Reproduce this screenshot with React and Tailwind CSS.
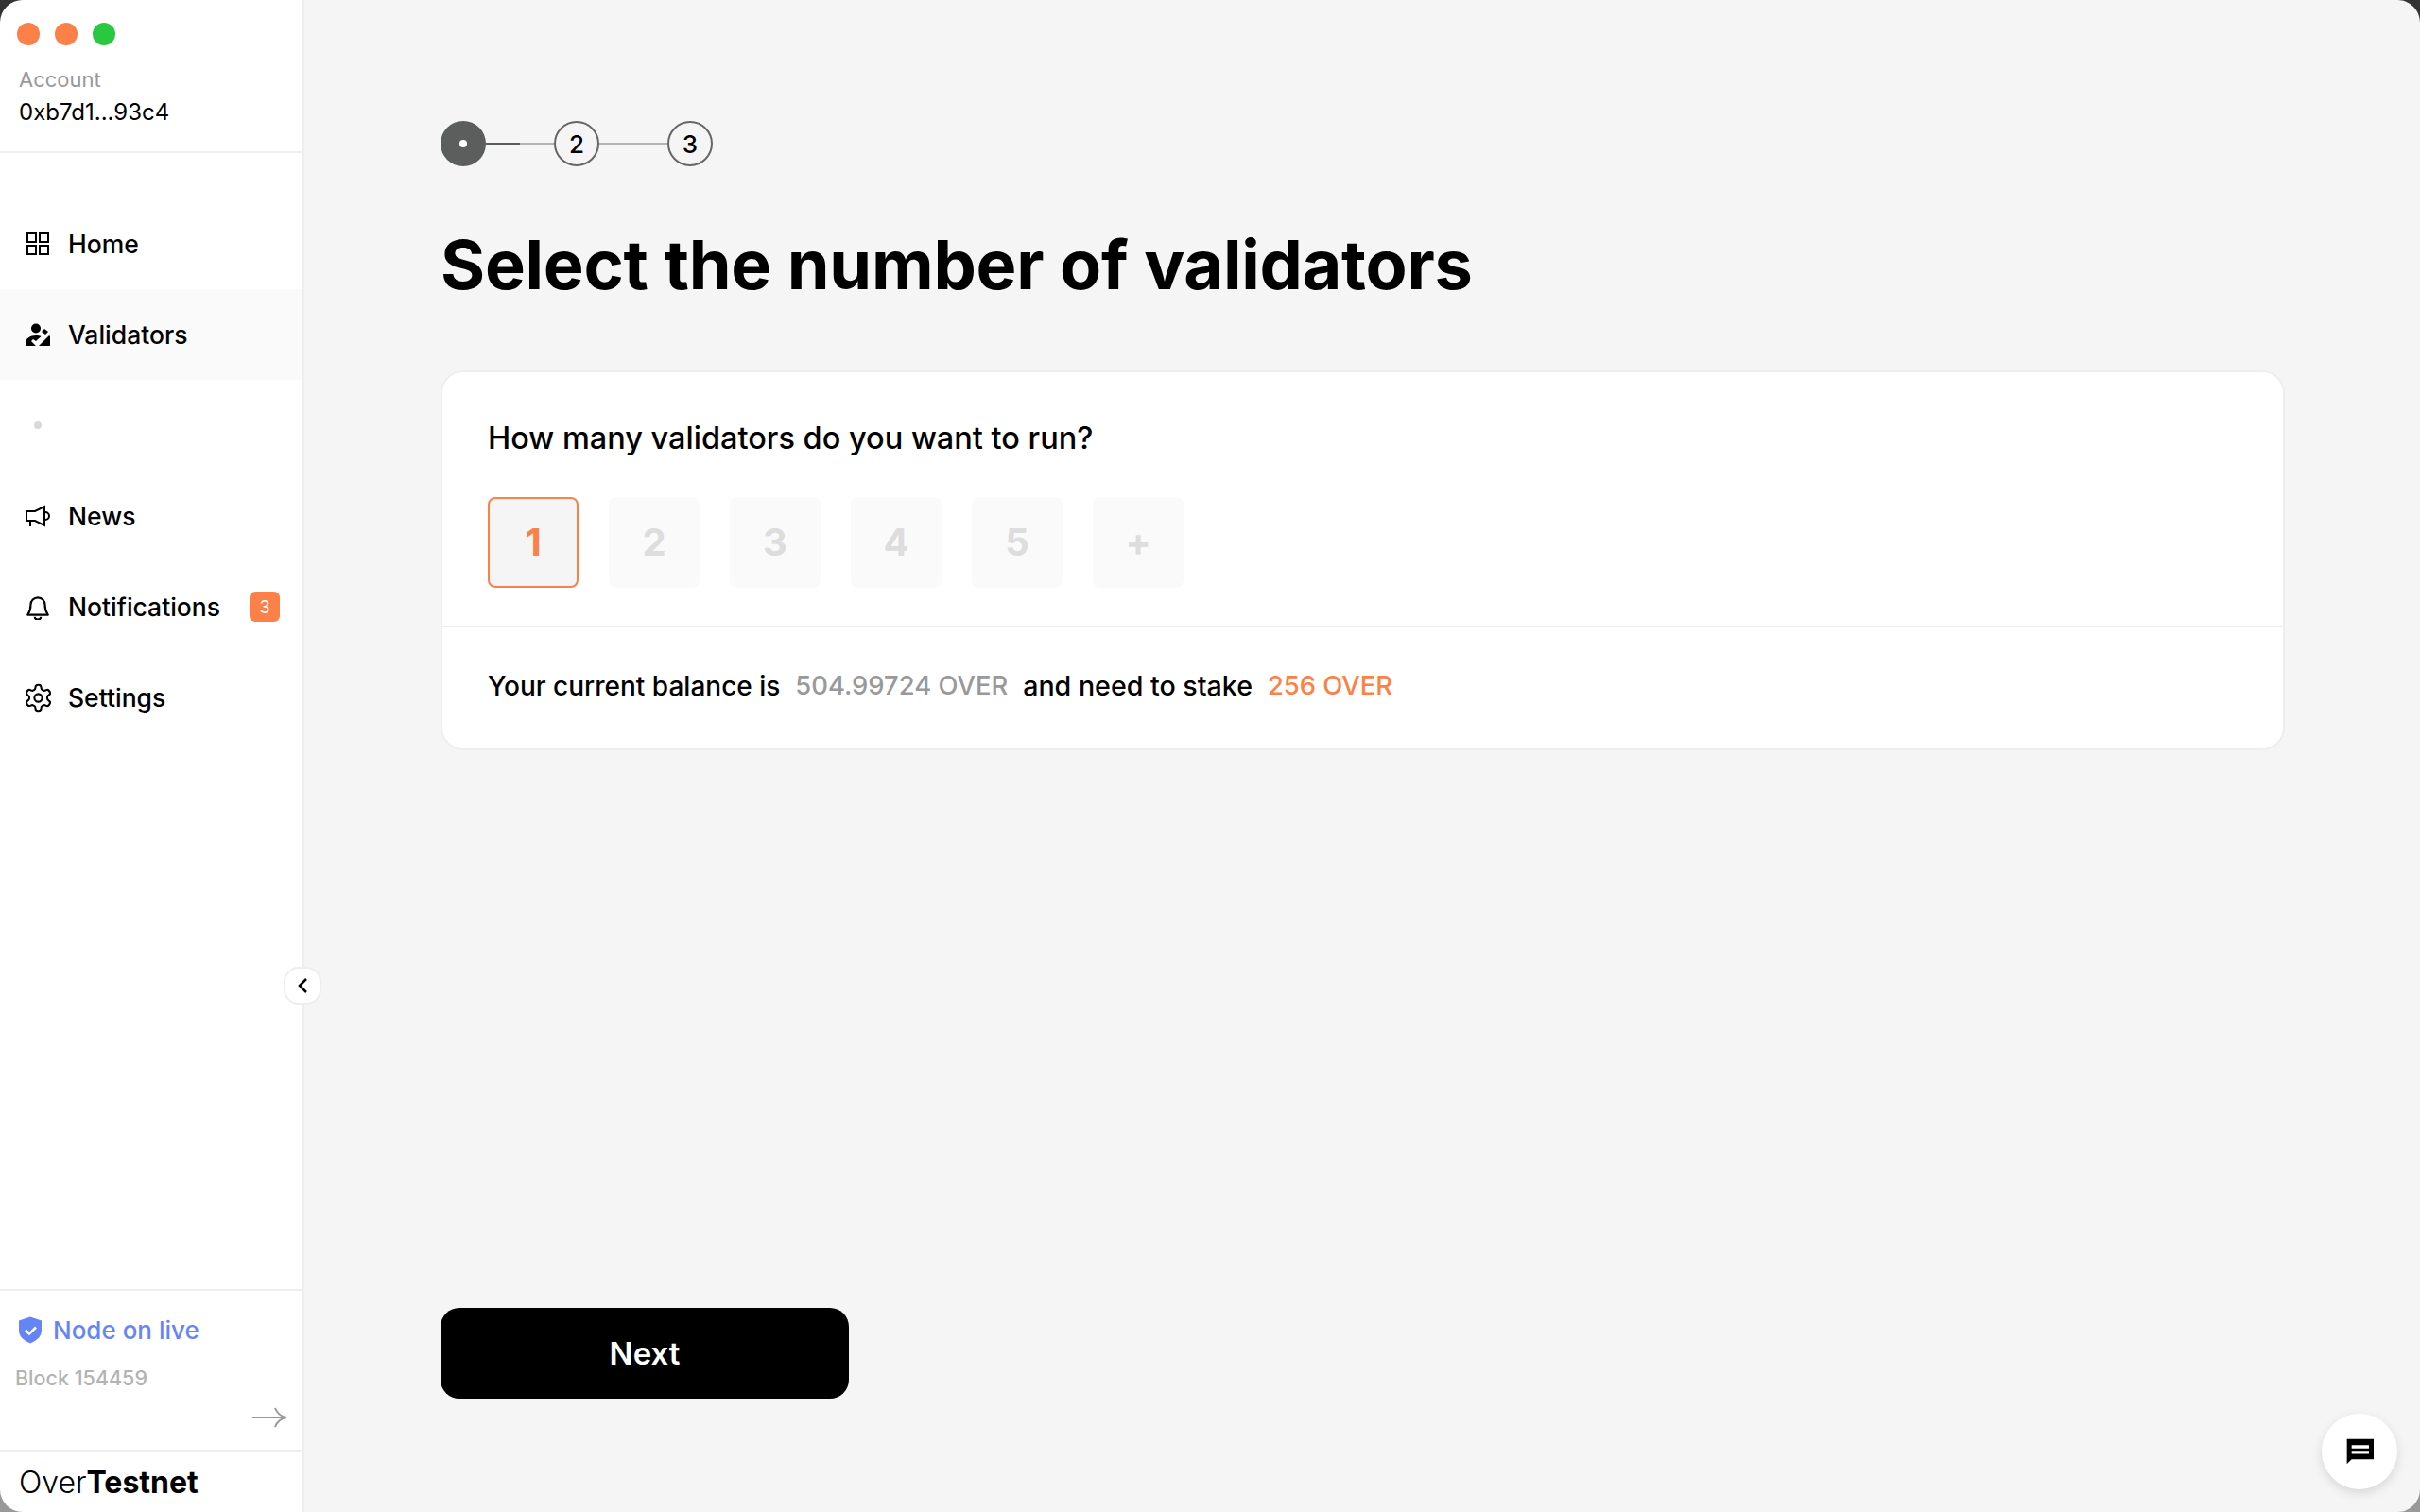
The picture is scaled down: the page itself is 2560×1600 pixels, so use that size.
import { useState } from 'react';

const HomeIcon = () => (
  <svg width="24" height="24" viewBox="0 0 24 24" fill="none" stroke="#000" strokeWidth="2">
    <rect x="1" y="1" width="9" height="9" />
    <rect x="14" y="1" width="9" height="9" />
    <rect x="1" y="14" width="9" height="9" />
    <rect x="14" y="14" width="9" height="9" />
  </svg>
);

const ValidatorIcon = () => (
  <svg width="26" height="24" viewBox="0 0 26 24" fill="#000">
    <circle cx="11" cy="5.500" r="5" />
    <path d="M0 24v-3c0-5 5-8 11-8 2 0 4 .4 5.500 1L11 19l-3-2-2 2 5 5z" />
    <path d="M14 24l11-11 1 1v10z" />
    <path d="M17 9l3-3 4 3-3 3z" />
  </svg>
);

const NewsIcon = () => (
  <svg width="26" height="24" viewBox="0 0 26 24" fill="none" stroke="#000" strokeWidth="2">
    <path d="M1 7h9l10-5v20l-10-5H1z" />
    <path d="M5 17v6" />
    <path d="M21 8a4 4 0 0 1 0 8" />
  </svg>
);

const BellIcon = () => (
  <svg width="26" height="28" viewBox="0 0 24 26" fill="none" stroke="#000" strokeWidth="2">
    <path d="M5 11a7 7 0 0 1 14 0c0 6 1 7 3 10H2c2-3 3-4 3-10z" strokeLinejoin="round" />
    <path d="M9 23a3 2.500 0 0 0 6 0" />
  </svg>
);

const GearIcon = () => (
  <svg width="33" height="33" viewBox="0 0 24 24" fill="none" stroke="#000" strokeWidth="1.500" strokeLinecap="round" strokeLinejoin="round">
    <path d="M12.220 2h-.440a2 2 0 0 0-2 2v.180a2 2 0 0 1-1 1.730l-.430.250a2 2 0 0 1-2 0l-.150-.080a2 2 0 0 0-2.730.730l-.220.380a2 2 0 0 0 .730 2.730l.150.100a2 2 0 0 1 1 1.720v.510a2 2 0 0 1-1 1.740l-.150.090a2 2 0 0 0-.730 2.730l.220.380a2 2 0 0 0 2.730.730l.150-.080a2 2 0 0 1 2 0l.430.250a2 2 0 0 1 1 1.730V20a2 2 0 0 0 2 2h.440a2 2 0 0 0 2-2v-.180a2 2 0 0 1 1-1.730l.430-.250a2 2 0 0 1 2 0l.150.080a2 2 0 0 0 2.730-.730l.220-.390a2 2 0 0 0-.730-2.730l-.150-.080a2 2 0 0 1-1-1.740v-.500a2 2 0 0 1 1-1.740l.150-.090a2 2 0 0 0 .730-2.730l-.220-.380a2 2 0 0 0-2.730-.730l-.150.080a2 2 0 0 1-2 0l-.430-.250a2 2 0 0 1-1-1.730V4a2 2 0 0 0-2-2z" />
    <circle cx="12" cy="12" r="3" />
  </svg>
);

const ShieldIcon = () => (
  <svg width="24" height="29" viewBox="0 0 24 28">
    <path d="M12 0l12 4v10c0 7-5 11-12 14C5 25 0 21 0 14V4z" fill="#6685f5" />
    <path d="M7 14l4 4 7-7" fill="none" stroke="#fff" strokeWidth="2.500" />
  </svg>
);

const ArrowIcon = () => (
  <svg width="37" height="22" viewBox="0 0 37 22" fill="none" stroke="#999" strokeWidth="2">
    <path d="M0 11h36" />
    <path d="M24 1c2 5 6 9 12 10-6 1-10 5-12 10" />
  </svg>
);

const navItems = [
  { label: 'Home', icon: <HomeIcon /> },
  { label: 'Validators', icon: <ValidatorIcon />, active: true },
  { label: '', icon: <span className="block w-2 h-2 rounded-full bg-[#d9d9d9]" /> },
  { label: 'News', icon: <NewsIcon /> },
  { label: 'Notifications', icon: <BellIcon />, badge: 3 },
  { label: 'Settings', icon: <GearIcon /> },
];

const Sidebar = () => (
  <aside className="relative z-10 w-[322px] shrink-0 h-full flex flex-col bg-white border-r-2 border-[#eeeeee]">
    <div className="h-[162px] shrink-0 border-b-2 border-[#eeeeee] pt-[24px]">
      <div className="flex gap-4 pl-[18px]">
        <span className="w-6 h-6 rounded-full bg-[#fb8148]" />
        <span className="w-6 h-6 rounded-full bg-[#fb8148]" />
        <span className="w-6 h-6 rounded-full bg-[#28c840]" />
      </div>
      <p className="pl-5 mt-[19px] text-[22px] leading-[34px] text-[#999999]">Account</p>
      <p className="pl-5 text-[24px] leading-[35px] text-black">0xb7d1...93c4</p>
    </div>

    <nav className="pt-12 flex-1">
      {navItems.map((item, i) => (
        <div key={i} className={`h-24 flex items-center ${item.active ? 'bg-[#fafafa]' : ''}`}>
          <span className="w-[80px] flex justify-center shrink-0">{item.icon}</span>
          <span className="-ml-2 pt-0.5 text-[26.500px] font-medium text-black">{item.label}</span>
          {item.badge && (
            <span className="ml-auto mr-6 w-8 h-8 rounded-md bg-[#fb8148] text-white text-[18px] flex items-center justify-center">{item.badge}</span>
          )}
        </div>
      ))}
    </nav>

    <div className="h-[170px] shrink-0 border-t-2 border-[#eeeeee]">
      <div className="flex items-center gap-[12px] pl-5 pt-[22px]">
        <ShieldIcon />
        <span className="text-[26px] font-medium text-[#6685f5]">Node on live</span>
      </div>
      <p className="pl-4 mt-[15px] text-[21.500px] font-medium text-[#b3b3b3]">Block 154459</p>
      <div className="flex justify-end pr-[16px] mt-[15px]"><ArrowIcon /></div>
    </div>

    <div className="h-[66px] shrink-0 border-t-2 border-[#eeeeee] pl-5 pt-0.5 flex items-center text-[32px] text-black">
      <span className="font-light">Over</span><span className="font-bold">Testnet</span>
    </div>

    <button className="absolute left-[300px] top-[1023px] w-10 h-10 rounded-2xl bg-white border-2 border-[#eeeeee] flex items-center justify-center">
      <svg width="16" height="18" viewBox="0 0 16 18" fill="none" stroke="#000" strokeWidth="2.500"><path d="M12 2l-7 7 7 7" /></svg>
    </button>
  </aside>
);

const Stepper = () => (
  <div className="flex items-center">
    <div className="w-12 h-12 rounded-full bg-[#5c5e5e] flex items-center justify-center">
      <span className="w-2 h-2 rounded-full bg-white" />
    </div>
    <div className="w-9 h-0.5 bg-[#5c5e5e]" />
    <div className="w-9 h-0.5 bg-[#b3b3b3]" />
    <div className="w-12 h-12 rounded-full border-2 border-[#666666] flex items-center justify-center text-[26px] font-medium text-black">2</div>
    <div className="w-[72px] h-0.5 bg-[#b3b3b3]" />
    <div className="w-12 h-12 rounded-full border-2 border-[#666666] flex items-center justify-center text-[26px] font-medium text-black">3</div>
  </div>
);

const tiles = ['1', '2', '3', '4', '5', '+'];

const Main = () => {
  const [selected] = useState('1');
  return (
    <main className="relative flex-1 h-full flex flex-col bg-[#f5f5f5] pl-[144px] pr-[143px] pt-[128px] pb-[120px]">
      <Stepper />
      <h1 className="mt-[60px] text-[72px] leading-[88px] font-bold tracking-[-0.250px] text-black">Select the number of validators</h1>

      <section className="mt-[68px] bg-white rounded-3xl border-2 border-[#eeeeee]">
        <div className="px-12 pt-[48px] pb-10 border-b-2 border-[#eeeeee]">
          <p className="text-[32.500px] leading-[44px] font-medium text-black">How many validators do you want to run?</p>
          <div className="mt-[40px] flex gap-8">
            {tiles.map((t) => (
              <div
                key={t}
                className={`w-24 h-24 rounded-lg flex items-center justify-center text-[40px] font-bold ${
                  t === selected ? 'bg-[#f5f5f5] border-2 border-[#fb8148] text-[#fb8148]' : 'bg-[#fafafa] text-[#dddddd]'
                }`}
              >
                {t}
              </div>
            ))}
          </div>
        </div>
        <div className="h-[128px] px-12 pb-1 flex items-center gap-4 text-[28px] font-medium">
          <span className="text-black">Your current balance is</span>
          <span className="text-[27.400px] text-[#999999]">504.99724 OVER</span>
          <span className="text-[28.600px] text-black">and need to stake</span>
          <span className="text-[27.400px] text-[#fb8148]">256 OVER</span>
        </div>
      </section>

      <button className="mt-auto w-[432px] h-24 pt-0.5 rounded-[20px] bg-black text-white text-[33px] font-semibold">Next</button>

      <button className="absolute right-[24px] bottom-[24px] w-20 h-20 rounded-full bg-white shadow-[0_4px_12px_rgba(0,0,0,0.12)] flex items-center justify-center">
        <svg width="40" height="40" viewBox="0 0 24 24" fill="#000">
          <path d="M4 4h17v13H7l-3 3zM7 8v2h11V8zm0 3.500v2h11v-2z" fillRule="evenodd" />
        </svg>
      </button>
    </main>
  );
};

export default function App() {
  return (
    <div className="w-full h-screen bg-gradient-to-b from-[#333333] to-[#999999]">
      <div className="w-full h-full flex rounded-[24px] overflow-hidden font-['Inter',sans-serif]">
        <Sidebar />
        <Main />
      </div>
    </div>
  );
}
